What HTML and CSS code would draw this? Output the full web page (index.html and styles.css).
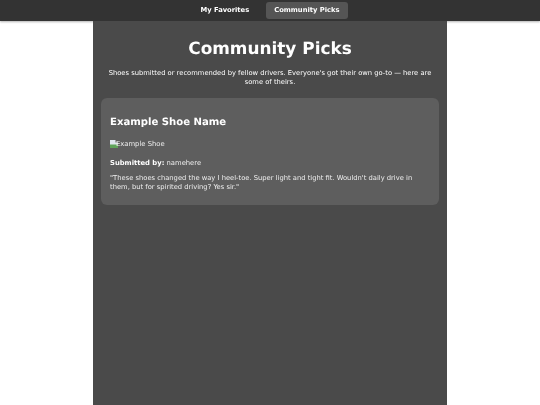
FILE: index.html
```html
<!DOCTYPE html>
<html lang="en">
<head>
<meta charset="utf-8">
<title>Community Picks</title>
<link rel="stylesheet" href="styles.css">
</head>
<body>
<nav class="topnav">
  <a class="tab" href="#">My Favorites</a>
  <a class="tab active" href="#">Community Picks</a>
</nav>
<main class="page">
  <h1 class="title">Community Picks</h1>
  <p class="intro">Shoes submitted or recommended by fellow drivers. Everyone's got their own go-to — here are some of theirs.</p>
  <article class="card">
    <h2 class="card-title">Example Shoe Name</h2>
    <div class="shoe-img">
      <svg class="broken" viewBox="0 0 8 8" width="8" height="8" aria-hidden="true">
        <rect width="8" height="8" fill="#dfe6ee"/>
        <rect y="4.5" width="8" height="3.5" fill="#5fa35a"/>
        <rect x="5.5" width="2.5" height="2.5" fill="#5e5e5e"/>
      </svg><span class="alt">Example Shoe</span>
    </div>
    <p class="meta"><strong>Submitted by:</strong> namehere</p>
    <p class="quote">"These shoes changed the way I heel-toe. Super light and tight fit. Wouldn't daily drive in them, but for spirited driving? Yes sir."</p>
  </article>
</main>
</body>
</html>
```
FILE: styles.css
```css
html, body {
  margin: 0;
  height: 100%;
}
body {
  background: #fff;
  color: #fff;
  font-family: "DejaVu Sans", sans-serif;
  font-size: 6.8px;
  text-rendering: geometricPrecision;
  display: flex;
  flex-direction: column;
  min-height: 405px;
  overflow: hidden;
  filter: blur(0.25px);
}
.topnav {
  background: #333;
  height: 21px;
  flex: none;
  display: flex;
  justify-content: center;
  align-items: center;
  gap: 9px;
  box-shadow: 0 1px 2px rgba(0,0,0,.3);
}
.tab {
  color: #fff;
  text-decoration: none;
  font-weight: 700;
  font-size: 6.75px;
  padding: 0 8px;
  height: 17px;
  line-height: 17px;
  border-radius: 3px;
}
.tab.active {
  background: #555;
}
.page {
  flex: 1;
  width: 354px;
  box-sizing: border-box;
  margin: 0 auto;
  background: #4a4a4a;
  padding: 15px 8px 0;
}
.title {
  margin: 0;
  font-size: 16.9px;
  line-height: 24px;
  text-align: center;
  font-weight: 700;
}
.intro {
  margin: 9px 0 0;
  font-size: 6.75px;
  line-height: 8.5px;
  text-align: center;
}
.card {
  margin-top: 12px;
  height: 107px;
  box-sizing: border-box;
  background: #5e5e5e;
  border-radius: 6px;
  padding: 17px 9px 0;
}
.card-title {
  margin: 0;
  font-size: 10.1px;
  line-height: 16px;
  font-weight: 700;
}
.shoe-img {
  margin-top: 7px;
  height: 12px;
  display: flex;
  align-items: center;
  color: #eee;
}
.broken {
  flex: none;
}
.alt {
  margin-left: -2px;
}
.meta {
  margin: 8px 0 0;
  line-height: 10px;
  color: #eee;
}
.meta strong {
  color: #fff;
}
.quote {
  margin: 6px 0 0;
  font-size: 6.75px;
  line-height: 9px;
  color: #eee;
}
```
